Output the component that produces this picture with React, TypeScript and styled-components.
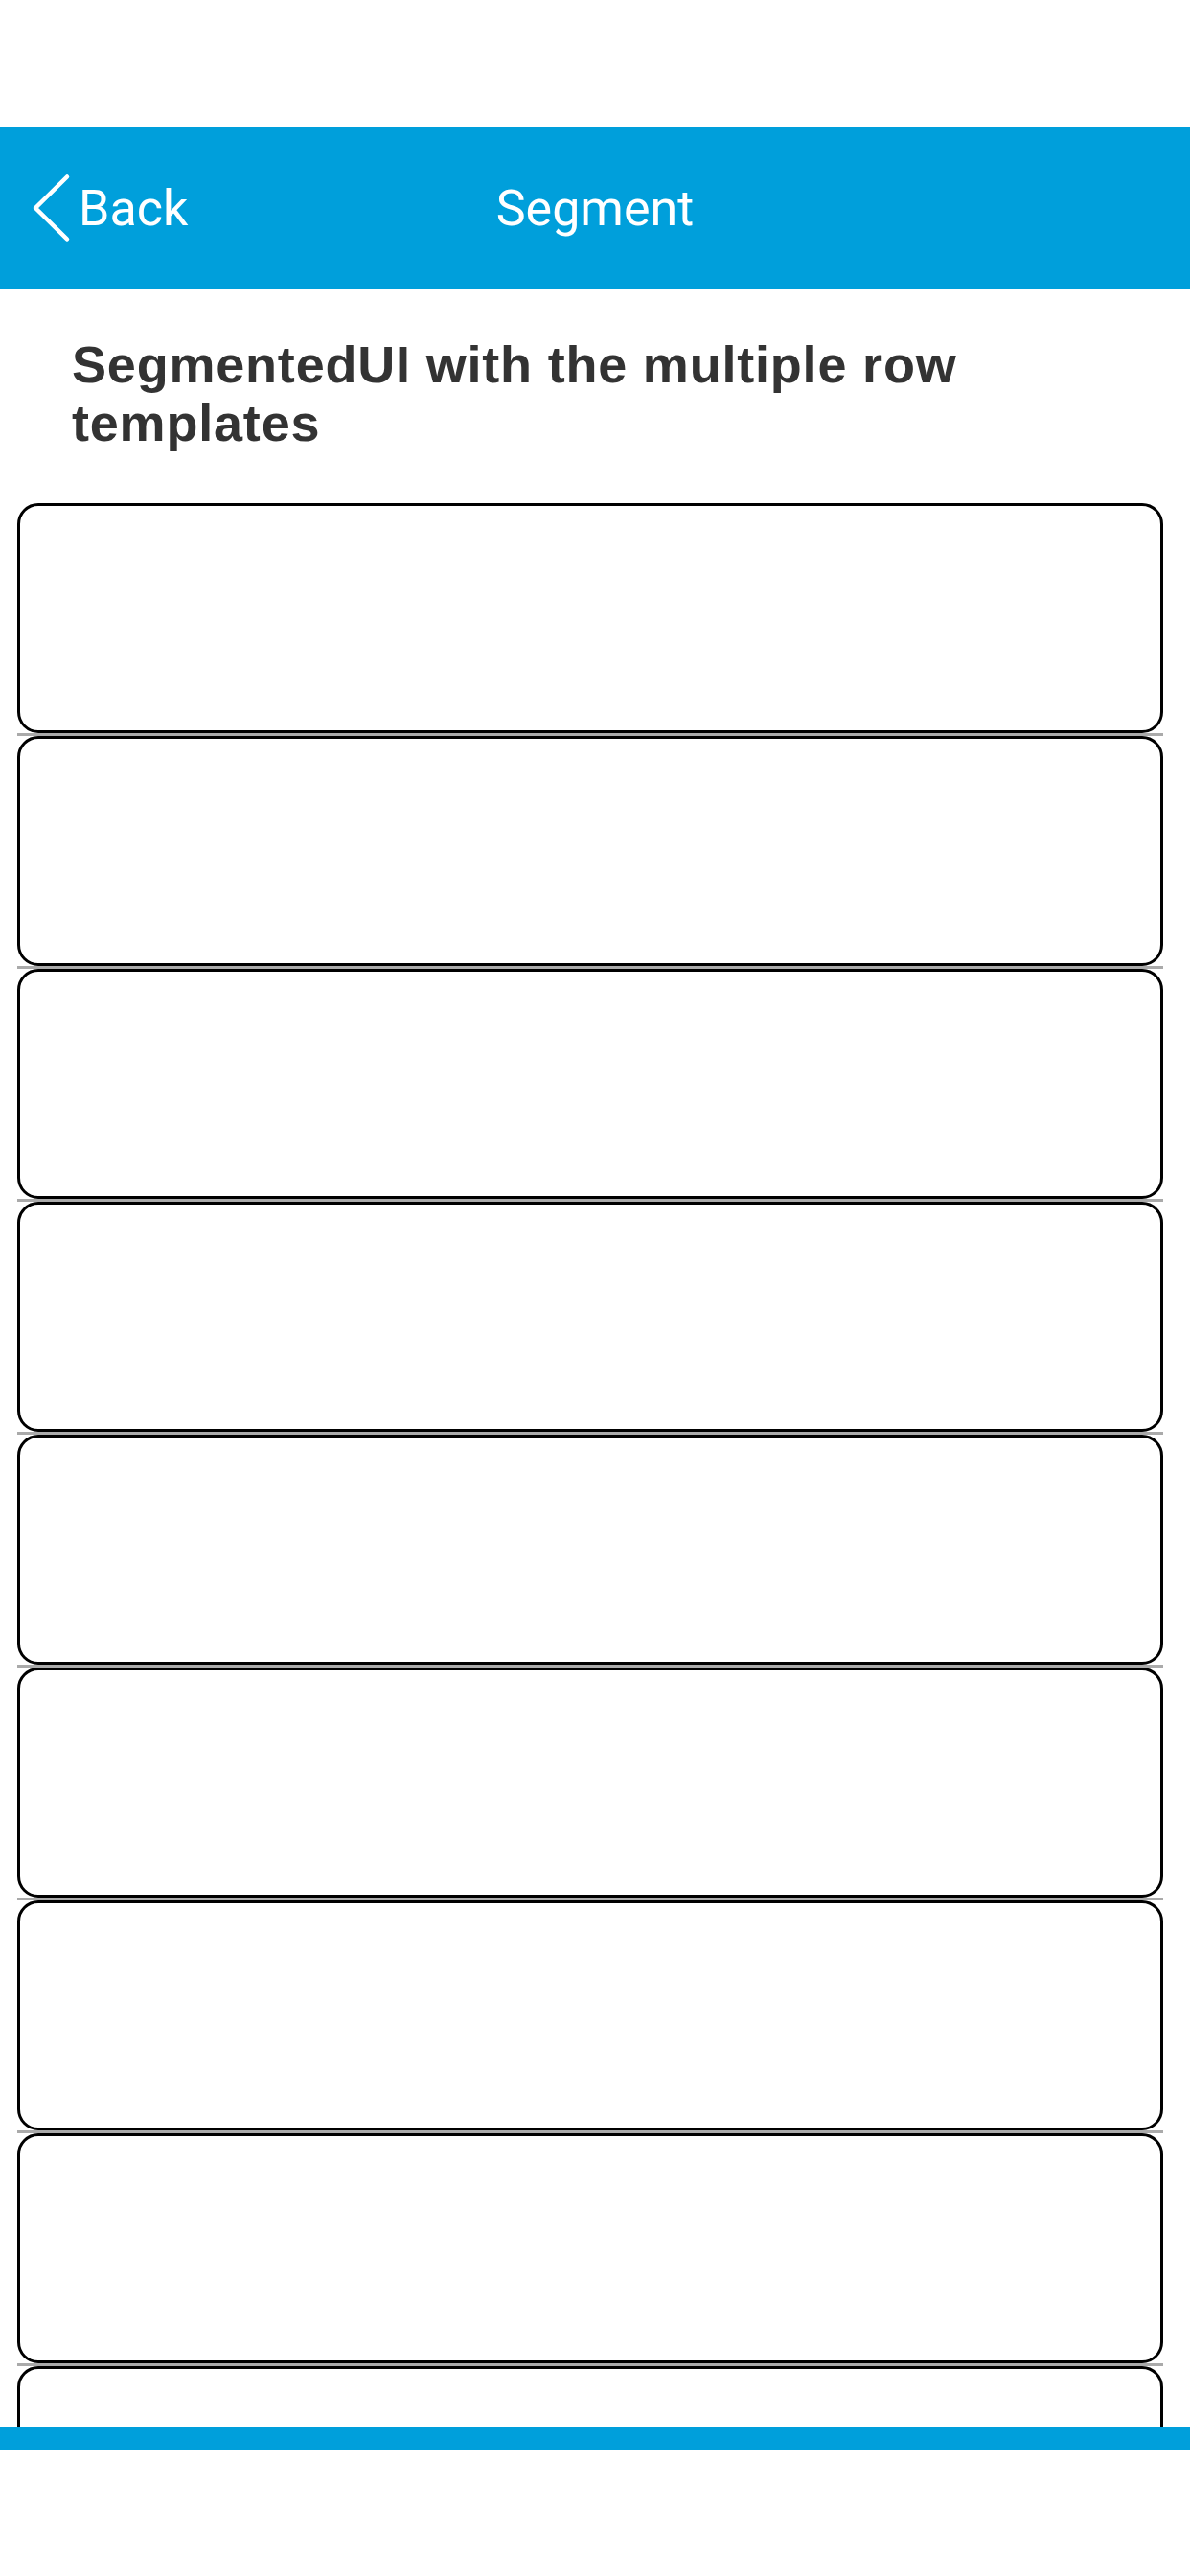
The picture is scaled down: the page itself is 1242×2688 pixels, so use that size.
import React from "react";
import styled, { createGlobalStyle } from "styled-components";

const GlobalStyle = createGlobalStyle`
  html, body {
    margin: 0;
    padding: 0;
    background: #ffffff;
  }
  * { box-sizing: border-box; }
`;

const Page = styled.div`
  width: 1242px;
  height: 2688px;
  display: flex;
  flex-direction: column;
  background: #ffffff;
  overflow: hidden;
`;

const StatusSpace = styled.div`
  height: 132px;
  flex: none;
  background: #ffffff;
`;

const Header = styled.header`
  height: 170px;
  flex: none;
  background: #009fdb;
  position: relative;
  display: flex;
  align-items: center;
  justify-content: center;
  color: #ffffff;
  font-family: Roboto, "Noto Sans", sans-serif;
`;

const BackButton = styled.button`
  position: absolute;
  left: 33px;
  top: 50%;
  transform: translateY(-50%);
  display: flex;
  align-items: center;
  gap: 8px;
  background: none;
  border: none;
  padding: 0;
  color: #ffffff;
  font-family: Roboto, "Noto Sans", sans-serif;
  font-size: 52px;
  cursor: pointer;
`;

const Title = styled.h1`
  margin: 0;
  font-weight: 400;
  font-size: 52px;
  color: #ffffff;
  font-family: Roboto, "Noto Sans", sans-serif;
`;

const Heading = styled.h2`
  margin: 48px 75px 53px 75px;
  flex: none;
  font-family: "Liberation Sans", Arial, sans-serif;
  font-weight: 700;
  font-size: 54px;
  line-height: 61px;
  letter-spacing: 0.8px;
  color: #333333;
`;

const List = styled.div`
  flex: 1;
  min-height: 0;
  overflow: hidden;
  padding: 0 28px 0 18px;
  display: flex;
  flex-direction: column;
`;

const Row = styled.div`
  flex: none;
  display: flex;
  flex-direction: column;
`;

const Card = styled.div`
  height: 240px;
  border: 3px solid #000000;
  border-radius: 22px;
  background: #ffffff;
`;

const Separator = styled.div`
  height: 3px;
  background: #aaaaaa;
`;

const FooterBar = styled.div`
  height: 24px;
  flex: none;
  background: #009fdb;
`;

const BottomSpace = styled.div`
  height: 132px;
  flex: none;
  background: #ffffff;
`;

const Chevron = () => (
  <svg width="41" height="71" viewBox="0 0 41 71" fill="none">
    <path
      d="M37 3 L4 35.5 L37 68"
      stroke="#ffffff"
      strokeWidth="4.5"
      strokeLinecap="round"
      strokeLinejoin="round"
    />
  </svg>
);

export default function App() {
  const rows = Array.from({ length: 10 }, (_, i) => i);
  return (
    <>
      <GlobalStyle />
      <Page>
        <StatusSpace />
        <Header>
          <BackButton>
            <Chevron />
            <span>Back</span>
          </BackButton>
          <Title>Segment</Title>
        </Header>
        <Heading>SegmentedUI with the multiple row templates</Heading>
        <List>
          {rows.map((r) => (
            <Row key={r}>
              <Card />
              <Separator />
            </Row>
          ))}
        </List>
        <FooterBar />
        <BottomSpace />
      </Page>
    </>
  );
}
